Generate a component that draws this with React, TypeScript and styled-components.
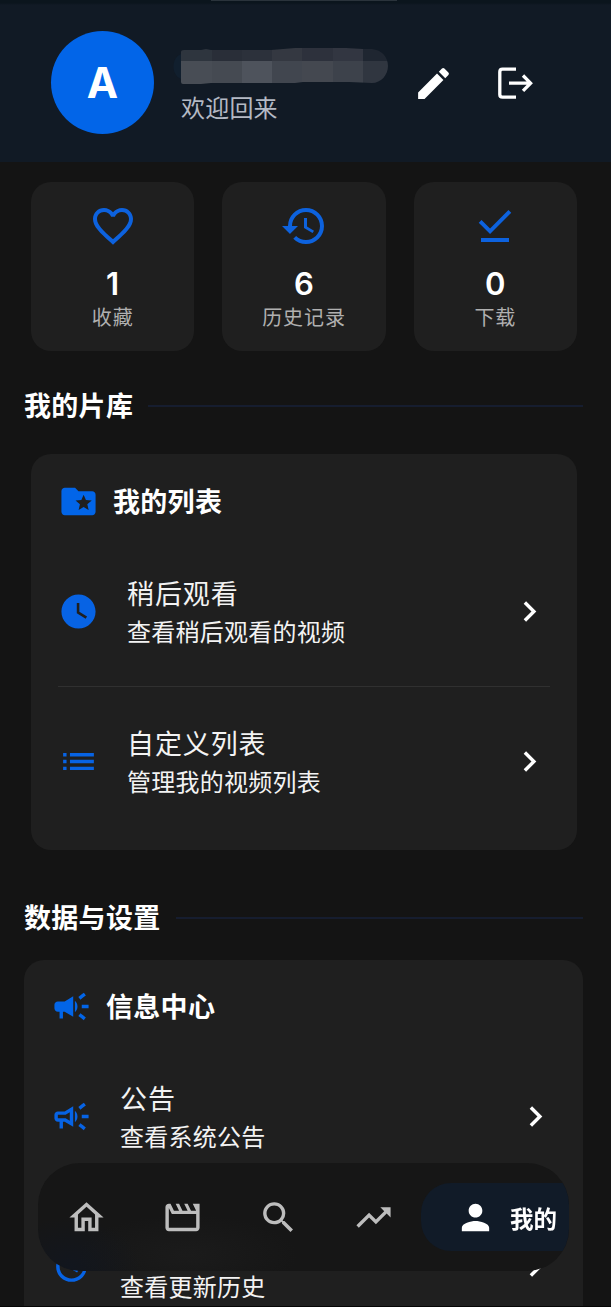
import React from 'react';
import styled, { createGlobalStyle } from 'styled-components';
import type { IconType } from 'react-icons';
import {
  MdCampaign, MdChevronRight, MdDownloadDone, MdEdit, MdFavoriteBorder, MdFolderSpecial,
  MdHistory, MdList, MdOutlineCampaign, MdOutlineHome, MdOutlineMovie, MdPerson,
  MdSearch, MdTrendingUp, MdUpdate, MdWatchLater,
} from 'react-icons/md';

const BLUE = '#0265e8';

const GlobalStyle = createGlobalStyle`
  * { box-sizing: border-box; }
  html, body { margin: 0; background: #141414; }
  body {
    font-family: Inter, "Noto Sans CJK SC", sans-serif;
    color: #fff;
    overflow: hidden;
  }
  svg { display: block; flex: none; }
`;

const Screen = styled.div`
  height: 1307px;
  overflow: hidden;
  background: #141414;
  border-bottom: 1px solid #050505;
`;

const Header = styled.header`
  height: 162px;
  padding: 4px 75px 0 51px;
  display: flex;
  align-items: center;
  background: linear-gradient(#0b151d 0, #0b151d 3px, #111a25 5px);
  position: relative;
`;

const Handle = styled.div`
  position: absolute;
  top: 0;
  left: 211px;
  width: 186px;
  height: 1px;
  background: #2a333b;
`;

const Avatar = styled.div`
  width: 103px;
  height: 103px;
  margin-top: -1px;
  border-radius: 50%;
  background: ${BLUE};
  display: flex;
  align-items: center;
  justify-content: center;
  font-size: 42px;
  font-weight: 700;
`;

const Profile = styled.div`
  flex: 1;
  padding: 6px 0 0 17px;
`;

const Welcome = styled.div`
  padding-left: 10px;
  margin-top: 5px;
  font-size: 24px;
  line-height: 36px;
  letter-spacing: 0.2px;
  color: #b4b9c4;
`;

const Actions = styled.div`
  display: flex;
  gap: 41px;
`;

const Stats = styled.section`
  display: grid;
  grid-template-columns: repeat(3, 1fr);
  gap: 28px;
  padding: 20px 34px 0 31px;
`;

const StatCard = styled.div`
  height: 169px;
  padding-top: 20px;
  border-radius: 20px;
  background: #1f1f1f;
  display: flex;
  flex-direction: column;
  align-items: center;
  color: #0d62de;
`;

const StatValue = styled.div`
  margin-top: 15px;
  font-size: 31px;
  font-weight: 600;
  line-height: 38px;
  color: #fff;
`;

const StatLabel = styled.div`
  font-size: 20px;
  line-height: 30px;
  letter-spacing: 0.9px;
  color: #b0b0b0;
`;

const SectionTitle = styled.h2<{ $top: number; $bottom: number }>`
  margin: ${p => p.$top}px 28px ${p => p.$bottom}px 24px;
  display: flex;
  align-items: center;
  gap: 15px;
  font-size: 27px;
  line-height: 40px;
  font-weight: 700;
  letter-spacing: 0.3px;
  &::after {
    content: '';
    flex: 1;
    height: 2px;
    margin-top: -2px;
    background: #161d2f;
  }
`;

const Card = styled.section<{ $wide?: boolean }>`
  margin: 0 ${p => (p.$wide ? '28px 0 24px' : '34px 0 31px')};
  padding: ${p => (p.$wide ? 11 : 12)}px 27px 14px;
  border-radius: 20px;
  background: #1f1f1f;
`;

const CardTitle = styled.h3`
  margin: 0;
  height: 70px;
  display: flex;
  align-items: center;
  gap: 14px;
  font-size: 27px;
  font-weight: 700;
  letter-spacing: 0.3px;
  svg { color: ${BLUE}; }
`;

const CardName = styled.span`
  padding-bottom: 2px;
`;

const Row = styled.div`
  height: 150px;
  display: flex;
  align-items: center;
  & + & { box-shadow: inset 0 1px #303030; }
  & > svg:first-child { color: #0763e4; }
`;

const RowText = styled.div`
  flex: 1;
  padding: 3px 0 0 28px;
  color: #f3f3f3;
`;

const RowName = styled.div`
  font-size: 27px;
  line-height: 41px;
  letter-spacing: 0.9px;
`;

const RowHint = styled.div`
  font-size: 24px;
  line-height: 36px;
  letter-spacing: 0.25px;
`;

const NavBar = styled.nav`
  position: fixed;
  left: 38px;
  top: 1163px;
  width: 531px;
  height: 108px;
  padding-left: 28px;
  border-radius: 42px;
  overflow: hidden;
  display: flex;
  align-items: center;
  gap: 54.75px;
  background:
    radial-gradient(70px 50px at 32px 104px, rgba(17, 22, 32, 0.8), transparent),
    radial-gradient(110px 40px at 150px 92px, #1b1b1b, transparent),
    #161616;
  color: #bdbdbd;
`;

const ActiveTab = styled.div`
  flex: 1;
  height: 68px;
  margin-left: -28px;
  padding-left: 34px;
  border-radius: 30px 0 0 30px;
  display: flex;
  align-items: center;
  gap: 14px;
  background: #111b28;
  color: #fff;
  font-size: 23.5px;
  font-weight: 700;
  white-space: nowrap;
`;

const ActiveLabel = styled.span`
  padding-top: 2px;
`;

const mosaic = [
  { x: 10, w: 31, top: '#2e353e', low: '#484d55' },
  { x: 41, w: 30, top: '#292e38', low: '#454a52' },
  { x: 71, w: 30, top: '#2c313b', low: '#4e535c' },
  { x: 101, w: 30, top: '#343841', low: '#41464f' },
  { x: 131, w: 31, top: '#2d313c', low: '#444850' },
  { x: 162, w: 30, top: '#323641', low: '#3d424b' },
  { x: 192, w: 26, top: '#1f2631', low: '#303640' },
];

const HiddenName = () => (
  <svg width="218" height="40" viewBox="0 0 218 40">
    <clipPath id="nameShape">
      <path d="M10 6Q10 4 13 4L30 4 35 3 40 4H100L124 2H175L192 3H201C211 4 217 11 217 20S210 37 201 37L178 36H132L124 37H52L40 37 30 38H12Q10 38 10 36Z" />
    </clipPath>
    <path d="M10 8C0 12 0 29 10 33Z" fill="#111f2e" />
    <g clipPath="url(#nameShape)" shapeRendering="crispEdges">
      {mosaic.map(b => (
        <React.Fragment key={b.x}>
          <rect x={b.x} y="0" width={b.w} height="15" fill={b.top} />
          <rect x={b.x} y="15" width={b.w} height="25" fill={b.low} />
        </React.Fragment>
      ))}
    </g>
  </svg>
);

const LogoutIcon = () => (
  <svg width="41" height="41" viewBox="0 0 41 41" fill="none" stroke="#fff" strokeWidth="3.3">
    <path d="M21 6.2H7.5Q4.8 6.2 4.8 8.9V31.5Q4.8 34.2 7.5 34.2H21" />
    <path d="M14 20.2H36M28 12.5 35.6 20.2 28 27.9" />
  </svg>
);

const stats: { icon: IconType; value: number; label: string }[] = [
  { icon: MdFavoriteBorder, value: 1, label: '收藏' },
  { icon: MdHistory, value: 6, label: '历史记录' },
  { icon: MdDownloadDone, value: 0, label: '下载' },
];

const MenuRow = ({ icon: Icon, name, hint }: { icon: IconType; name: string; hint: string }) => (
  <Row>
    <Icon size={41} />
    <RowText>
      <RowName>{name}</RowName>
      <RowHint>{hint}</RowHint>
    </RowText>
    <MdChevronRight size={41} />
  </Row>
);

export default function App() {
  return (
    <>
      <GlobalStyle />
      <Screen>
        <Header>
          <Handle />
          <Avatar>A</Avatar>
          <Profile>
            <HiddenName />
            <Welcome>欢迎回来</Welcome>
          </Profile>
          <Actions>
            <MdEdit size={41} />
            <LogoutIcon />
          </Actions>
        </Header>
        <Stats>
          {stats.map(({ icon: Icon, value, label }) => (
            <StatCard key={label}>
              <Icon size={48} />
              <StatValue>{value}</StatValue>
              <StatLabel>{label}</StatLabel>
            </StatCard>
          ))}
        </Stats>
        <SectionTitle $top={36} $bottom={27}>我的片库</SectionTitle>
        <Card>
          <CardTitle><MdFolderSpecial size={41} /><CardName>我的列表</CardName></CardTitle>
          <MenuRow icon={MdWatchLater} name="稍后观看" hint="查看稍后观看的视频" />
          <MenuRow icon={MdList} name="自定义列表" hint="管理我的视频列表" />
        </Card>
        <SectionTitle $top={49} $bottom={21}>数据与设置</SectionTitle>
        <Card $wide>
          <CardTitle><MdCampaign size={41} /><CardName>信息中心</CardName></CardTitle>
          <MenuRow icon={MdOutlineCampaign} name="公告" hint="查看系统公告" />
          <MenuRow icon={MdUpdate} name="更新日志" hint="查看更新历史" />
        </Card>
      </Screen>
      <NavBar>
        <MdOutlineHome size={41} />
        <MdOutlineMovie size={41} />
        <MdSearch size={41} />
        <MdTrendingUp size={41} />
        <ActiveTab><MdPerson size={41} /><ActiveLabel>我的</ActiveLabel></ActiveTab>
      </NavBar>
    </>
  );
}
